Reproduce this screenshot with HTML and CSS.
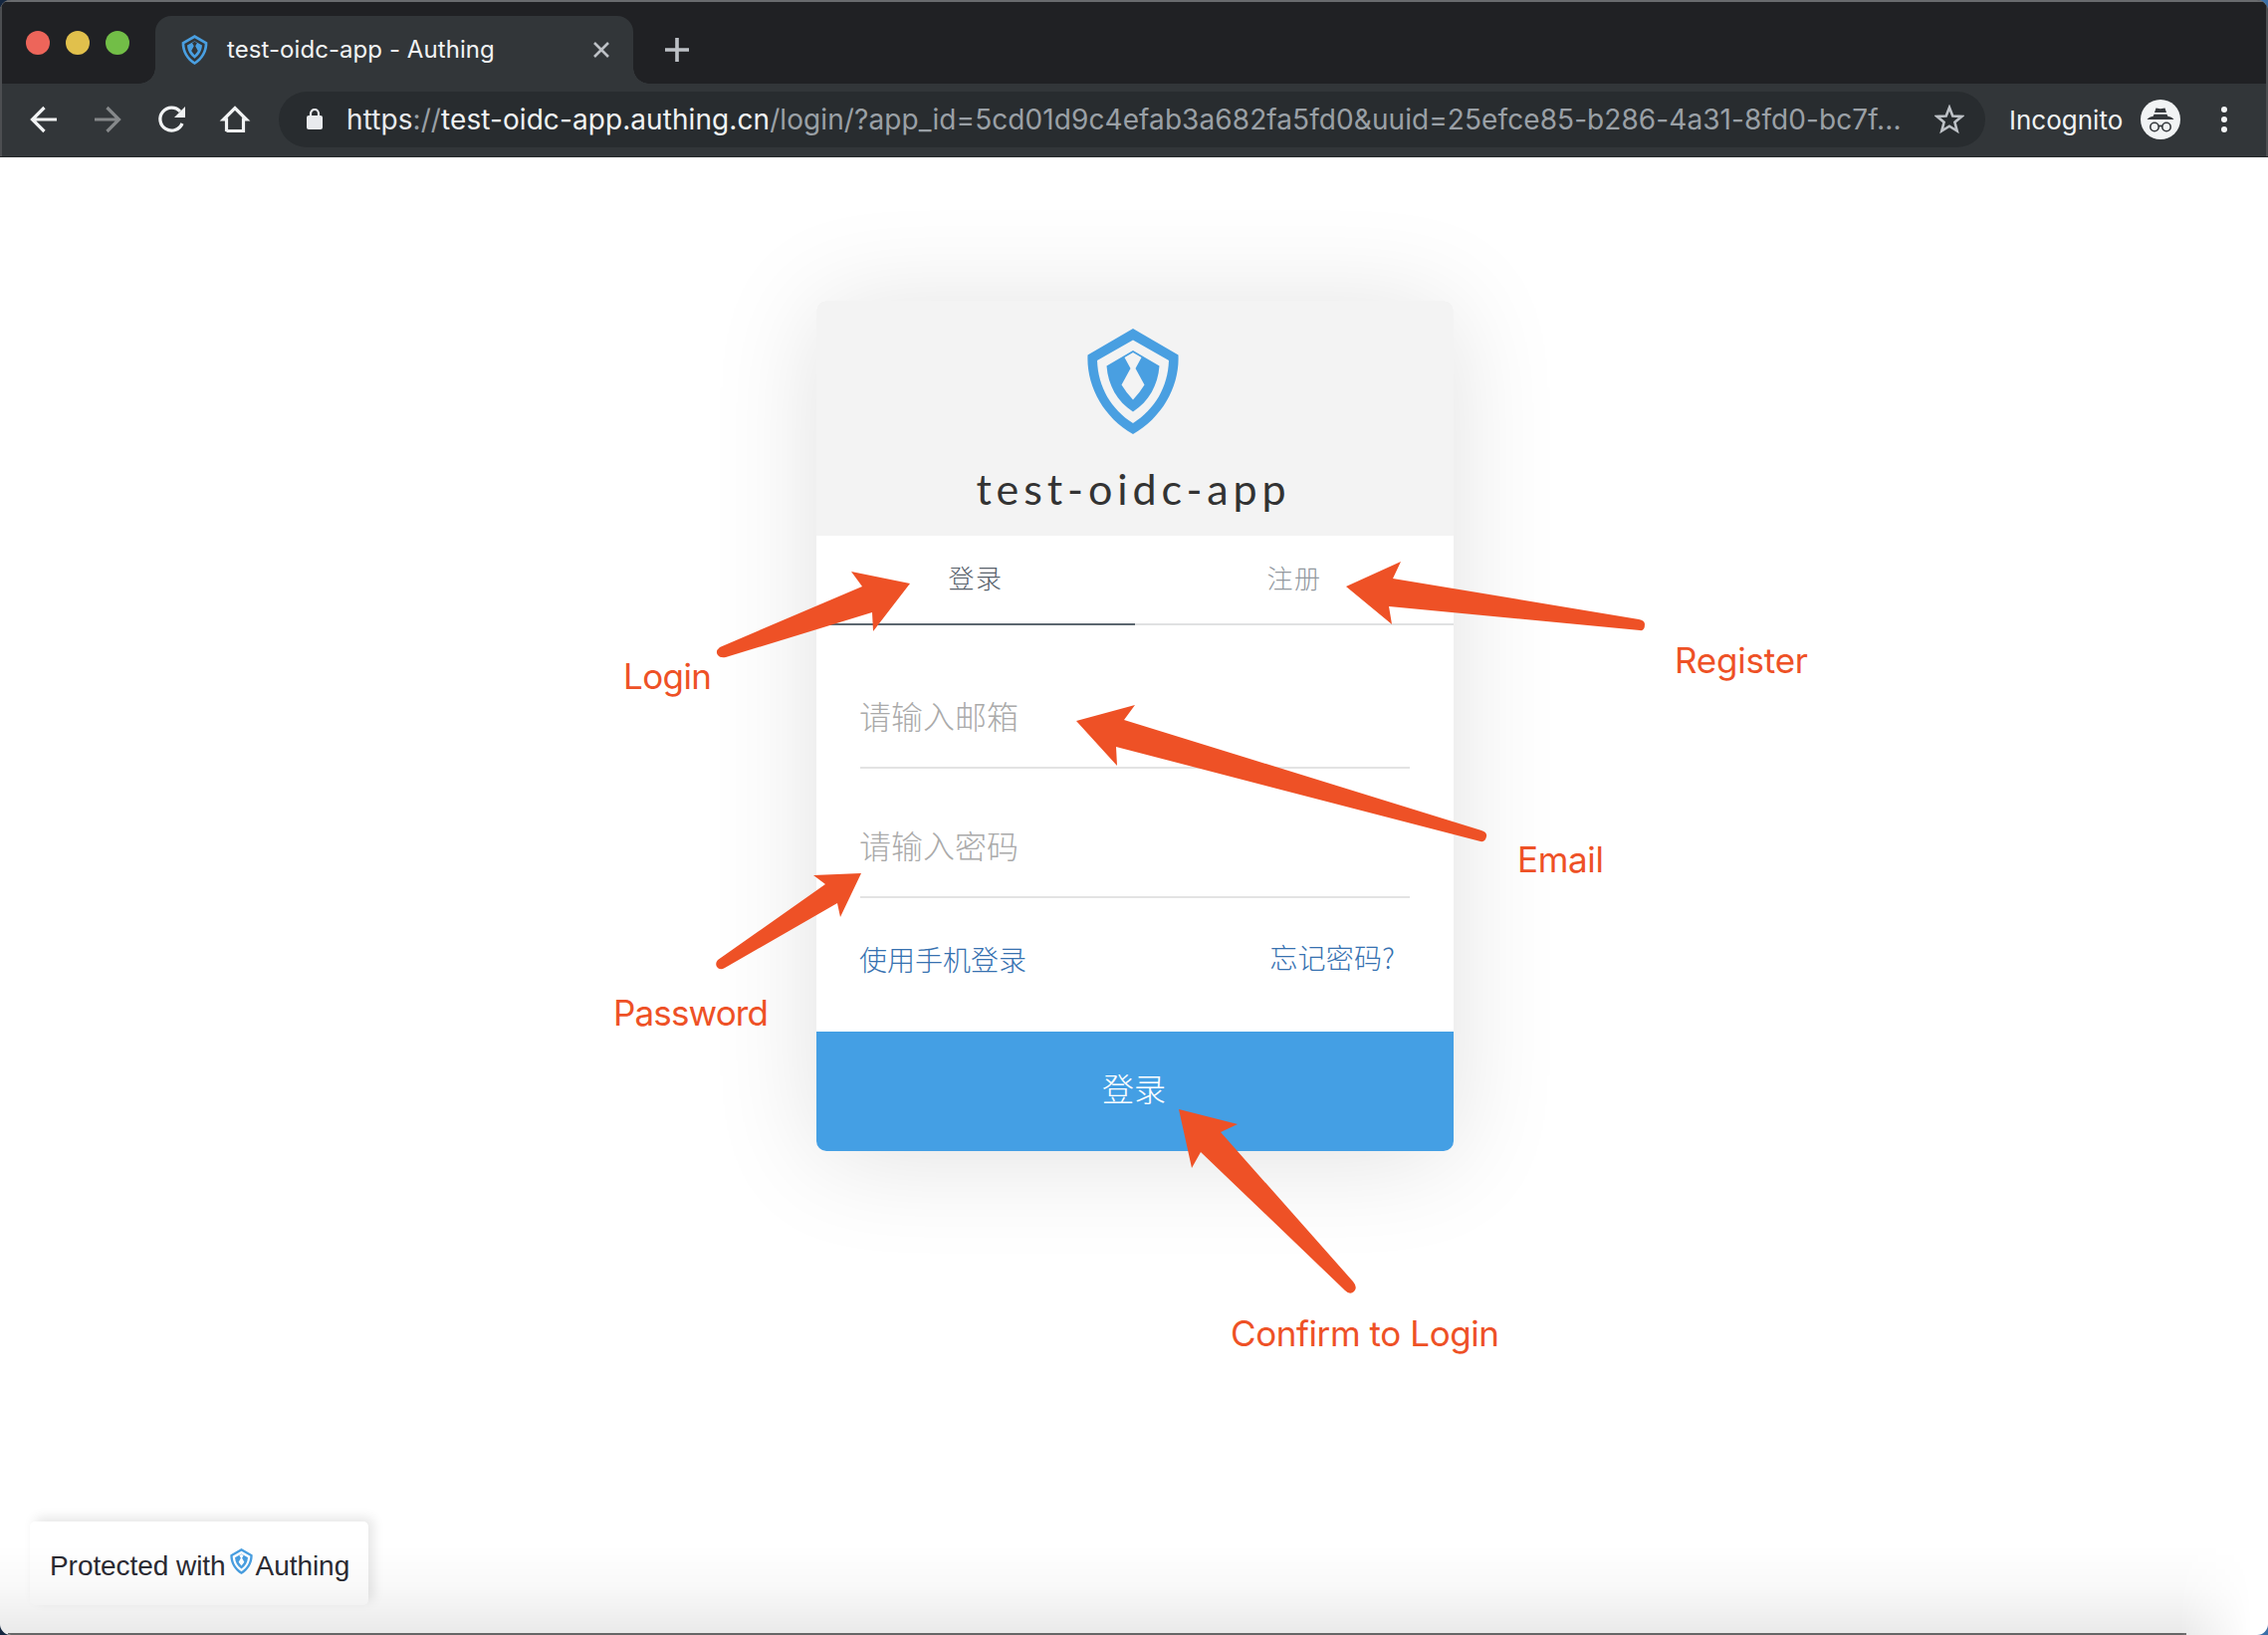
FILE: index.html
```html
<!DOCTYPE html>
<html lang="zh-CN">
<head>
<meta charset="utf-8">
<title>test-oidc-app - Authing</title>
<link rel="stylesheet" href="styles.css">
</head>
<body>
<svg class="defs" width="0" height="0">
  <symbol id="logo" viewBox="0 0 92 106">
    <path fill="#499fe1" fill-rule="evenodd" d="M46 0 91.500 26.500C93 57 76 89 46 106C16 89-1 57 .5 26.500ZM46 11.500 10 32C11 59 24 81 46 95C68 81 81 59 82 32Z"/>
    <path fill="#499fe1" fill-rule="evenodd" d="M46 22 72.500 37.500C71 57 62 73 46 83.500C30 73 21 57 19.500 37.500ZM46 24 37.500 29 43.500 40 34.500 56.500Q39 64 46 71.500Q53 64 57.500 56.500L48.500 40 54.500 29Z"/>
  </symbol>
</svg>
<div class="window">
  <header class="tabstrip">
    <div class="lights"><i class="light red"></i><i class="light yellow"></i><i class="light green"></i></div>
    <div class="tab">
      <svg class="favicon"><use href="#logo"/></svg>
      <span class="tab-title">test-oidc-app - Authing</span>
      <svg class="close" viewBox="0 0 16 16"><path d="M1 1 15 15M15 1 1 15" stroke="#bdc1c6" stroke-width="2.600"/></svg>
    </div>
    <svg class="plus" viewBox="0 0 24 24"><path d="M12 0V24M0 12H24" stroke="#bdc1c6" stroke-width="3.600"/></svg>
  </header>
  <nav class="toolbar">
    <svg class="tool" viewBox="0 0 32 32"><path d="M29 16H5M16.500 4 4.500 16 16.500 28" fill="none" stroke="#f1f3f4" stroke-width="3.200"/></svg>
    <svg class="tool" viewBox="0 0 32 32"><path d="M3 16H27M15.500 4 27.500 16 15.500 28" fill="none" stroke="#85888a" stroke-width="3.200"/></svg>
    <svg class="tool" viewBox="0 0 32 32"><path d="M27 20A11.500 11.500 0 1 1 25 8" fill="none" stroke="#f1f3f4" stroke-width="3.300"/><path d="M30 3V14H19Z" fill="#f1f3f4"/></svg>
    <svg class="tool" viewBox="0 0 32 32"><path d="M7.500 28V16H4.500L16 4.500 27.500 16H24.500V27.500H7.500" fill="none" stroke="#f1f3f4" stroke-width="3.200"/></svg>
    <div class="omnibox">
      <svg class="lock" viewBox="0 0 16 22"><rect y="7" width="16" height="14" rx="2" fill="#e8eaed"/><path d="M4 8V5a4 4 0 0 1 8 0V8" fill="none" stroke="#e8eaed" stroke-width="2.200"/></svg>
      <span class="url"><span class="scheme">https</span>://<b>test-oidc-app.authing.cn</b><span class="path">/login/?app_id=5cd01d9c4efab3a682fa5fd0&amp;uuid=25efce85-b286-4a31-8fd0-bc7f...</span></span>
      <svg class="star" viewBox="0 0 30 30"><path d="M15 3 18.300 11.500 27.300 12 20.400 17.800 22.700 26.500 15 21.700 7.300 26.500 9.600 17.800 2.700 12 11.700 11.500Z" fill="none" stroke="#bdc1c6" stroke-width="2.600"/></svg>
    </div>
    <span class="incognito">Incognito</span>
    <svg class="spy" viewBox="0 0 40 40"><circle cx="20" cy="20" r="20" fill="#f1f3f4"/><g fill="#35383c"><path d="M15.500 8.500 20 9.300 24.500 8.500 26 13H14Z"/><path d="M13.500 14.800H26.500L27.300 16.800Q32 17.800 33.500 20H6.500Q8 17.800 12.700 16.800Z"/></g><g fill="none" stroke="#35383c" stroke-width="1.600"><circle cx="14" cy="27.500" r="4.200"/><circle cx="26" cy="27.500" r="4.200"/><path d="M18.200 27Q20 25.800 21.800 27"/></g></svg>
    <svg class="dots" viewBox="0 0 6 26"><g fill="#f1f3f4"><circle cx="3" cy="3" r="3"/><circle cx="3" cy="13" r="3"/><circle cx="3" cy="23" r="3"/></g></svg>
  </nav>
  <main class="page">
    <section class="card">
      <div class="card-head">
        <svg class="brand"><use href="#logo"/></svg>
        <h1>test-oidc-app</h1>
      </div>
      <div class="tabs"><a class="active">登录</a><a>注册</a></div>
      <form class="form">
        <div class="field">请输入邮箱</div>
        <div class="field">请输入密码</div>
        <div class="links"><a>使用手机登录</a><a class="forgot">忘记密码?</a></div>
      </form>
      <div class="submit">登录</div>
    </section>
    <footer class="badge"><span>Protected with</span><svg class="badge-logo"><use href="#logo"/></svg><span>Authing</span></footer>
  </main>
</div>
<div class="bottom-shade"></div>
<svg class="notes" viewBox="0 0 2278 1642">
  <path d="M914 586 855 574 866 589 723 650Q718 654 721 658Q723 661 729 660L876 615 877 634Z"/>
  <path d="M865 877 817 879 829 888 721 964Q718 967 720 971Q723 975 728 972L841 907 844 921Z"/>
  <path d="M1352 589 1407 564 1399 581 1646 622Q1652 623 1652 627Q1652 634 1647 633L1395 609 1398 627Z"/>
  <path d="M1081 724 1140 708 1129 723 1488 834Q1494 836 1493 840Q1492 846 1487 845L1121 750 1122 769Z"/>
  <path d="M1184 1114 1243 1129 1226 1137 1359 1287Q1364 1293 1360 1297Q1356 1301 1351 1296L1206 1157 1197 1173Z"/>
  <text x="626" y="692" textLength="89">Login</text>
  <text x="616" y="1030" textLength="156">Password</text>
  <text x="1682" y="676" textLength="134">Register</text>
  <text x="1524" y="876" textLength="87">Email</text>
  <text x="1236" y="1352" textLength="270">Confirm to Login</text>
</svg>
</body>
</html>
```
FILE: styles.css
```css
* { box-sizing: border-box; }
body {
  margin: 0;
  width: 2278px;
  height: 1642px;
  overflow: hidden;
  position: relative;
  background: linear-gradient(90deg, #14263f, #3a6fa8);
  font-family: Inter, "Noto Sans CJK SC", sans-serif;
}
.defs { position: absolute; }
.window {
  display: flex;
  flex-direction: column;
  height: 1642px;
  border-radius: 11px;
  overflow: hidden;
  background: #fff;
}
.tabstrip {
  display: flex;
  height: 84px;
  flex: none;
  background: #202124;
  box-shadow: inset 0 2px #696b6e, inset 2px 0 #4c4e51, inset -2px 0 #4c4e51;
}
.lights { display: flex; gap: 16px; padding: 31px 0 0 26px; width: 156px; }
.light { width: 24px; height: 24px; border-radius: 50%; }
.red { background: #ed655a; }
.yellow { background: #e1c04c; }
.green { background: #72be47; }
.tab {
  position: relative;
  display: flex;
  align-items: center;
  width: 480px;
  height: 68px;
  margin-top: 16px;
  padding: 0 24px 0 26px;
  background: #323639;
  border-radius: 16px 16px 0 0;
}
.tab::before, .tab::after {
  content: "";
  position: absolute;
  bottom: 0;
  width: 16px;
  height: 16px;
}
.tab::before { left: -16px; background: radial-gradient(circle at 0 0, transparent 15.500px, #323639 16px); }
.tab::after { right: -16px; background: radial-gradient(circle at 100% 0, transparent 15.500px, #323639 16px); }
.favicon { width: 27px; height: 30px; }
.tab-title { margin-left: 19px; padding-bottom: 2px; font-size: 24px; letter-spacing: .07px; color: #f1f3f4; white-space: nowrap; flex: 1; }
.close { width: 16px; height: 16px; }
.plus { width: 24px; height: 24px; margin: 38px 0 0 32px; }
.toolbar {
  display: flex;
  align-items: center;
  flex: none;
  height: 74px;
  padding: 0 41px 2px 28px;
  background: #323639;
  border-bottom: 1px solid #26292b;
  box-shadow: inset 2px 0 #4c4e51, inset -2px 0 #4c4e51;
}
.tool { width: 32px; height: 32px; margin-right: 32px; flex: none; }
.omnibox {
  display: flex;
  align-items: center;
  width: 1714px;
  height: 56px;
  margin-left: -4px;
  padding: 0 21px 0 28px;
  border-radius: 28px;
  background: #282c2f;
}
.lock { width: 16px; height: 22px; flex: none; }
.url { margin-left: 24px; padding-top: 1px; font-size: 28px; white-space: nowrap; color: #9aa0a6; flex: 1; letter-spacing: .08px; }
.url b { font-weight: 400; color: #f1f3f4; }
.scheme { color: #e8eaed; }
.star { width: 30px; height: 30px; flex: none; }
.incognito { width: 132px; margin-left: 24px; padding-top: 2px; font-size: 26px; color: #f1f3f4; letter-spacing: 0; }
.spy { width: 40px; height: 40px; flex: none; }
.dots { width: 6px; height: 26px; margin-left: auto; flex: none; }
.page { flex: 1; display: flex; flex-direction: column; padding-top: 144px; }
.card {
  display: flex;
  flex-direction: column;
  width: 640px;
  height: 854px;
  margin-left: 820px;
  border-radius: 10px;
  background: #fff;
  box-shadow: 0 6px 110px rgba(0, 0, 0, .12);
}
.card-head {
  display: flex;
  flex-direction: column;
  align-items: center;
  height: 236px;
  padding-top: 28px;
  border-radius: 10px 10px 0 0;
  background: #f3f3f3;
}
.brand { width: 92px; height: 106px; margin-right: 4px; }
h1 { margin: 25px 3px 0 0; font: 400 43px/60px Lato, sans-serif; letter-spacing: 4.900px; color: #333; white-space: nowrap; }
.tabs { display: flex; height: 90px; }
.tabs a {
  width: 320px;
  border-bottom: 2px solid #e0e1e2;
  text-align: center;
  font: 300 26px/84px "Noto Sans CJK SC", sans-serif;
  letter-spacing: 1.500px;
  color: #92989e;
}
.tabs .active { color: #56606a; border-color: #5c6770; }
.form { display: flex; flex-direction: column; padding: 0 44px; height: 408px; }
.field {
  height: 130px;
  border-bottom: 2px solid #e3e3e3;
  padding-top: 44px;
  font: 300 32px/64px "Noto Sans CJK SC", sans-serif;
  color: #aaa;
  text-indent: -1px;
}
.field:first-child { height: 144px; padding-top: 58px; }
.links { display: flex; justify-content: space-between; padding: 31px 15px 0 0; font: 300 28px/60px "Noto Sans CJK SC", sans-serif; color: #3671b0; text-indent: -1px; }
.forgot { line-height: 57px; letter-spacing: .2px; }
.submit {
  height: 120px;
  padding-right: 2px;
  border-radius: 0 0 10px 10px;
  background: #449fe4;
  color: #fff;
  text-align: center;
  font: 300 32px/113px "Noto Sans CJK SC", sans-serif;
}
.badge {
  display: flex;
  width: 340px;
  height: 84px;
  margin: 372px 0 0 30px;
  padding-left: 20px;
  border-radius: 5px;
  background: #fff;
  box-shadow: 5px -4px 12px rgba(0, 0, 0, .1);
  font: 28px/90px "Liberation Sans", Arial, sans-serif;
  letter-spacing: -.06px;
  color: #2b2b33;
  white-space: nowrap;
}
.badge-logo { width: 23px; height: 26px; margin: 27px 3px 0 4px; }
.bottom-shade {
  position: absolute;
  left: 0;
  bottom: 0;
  width: 2278px;
  height: 90px;
  border-radius: 0 0 11px 11px;
  background:
    linear-gradient(#666, #666) 8px 100% / 2188px 2px no-repeat,
    linear-gradient(rgba(0,0,0,0), rgba(0,0,0,.025) 45%, rgba(0,0,0,.085));
  -webkit-mask-image: linear-gradient(90deg, #000 2190px, transparent 2262px);
  mask-image: linear-gradient(90deg, #000 2190px, transparent 2262px);
}
.notes { position: absolute; left: 0; top: 0; width: 2278px; height: 1642px; fill: #ee5126; font-family: Inter, sans-serif; font-size: 35px; }
```
